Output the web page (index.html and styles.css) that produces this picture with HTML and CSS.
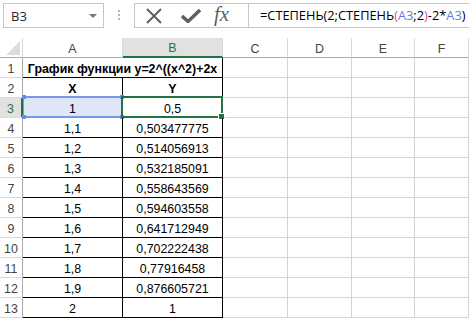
FILE: index.html
```html
<!DOCTYPE html>
<html lang="ru">
<head>
  <meta charset="UTF-8">
  <title>СТЕПЕНЬ</title>
  <link rel="stylesheet" href="styles.css">
</head>
<body>
  <div class="toolbar">
    <div class="name-box">
      <span>B3</span>
      <span class="arrow"></span>
    </div>
    <div class="grip"><i></i><i></i><i></i></div>
    <div class="formula-box">
      <div class="buttons">
        <svg width="18" height="16" viewBox="0 0 18 16"><path d="M2 1 L16 15 M16 1 L2 15" stroke="#5f5f5f" stroke-width="2" fill="none"/></svg>
        <svg width="20" height="14" viewBox="0 0 20 14"><path d="M1 7 L7 12.5 L19 1" stroke="#5f5f5f" stroke-width="3.4" fill="none"/></svg>
        <span class="fx">fx</span>
      </div>
      <div class="formula">=СТЕПЕНЬ(2;СТЕПЕНЬ<span class="paren">(</span><span class="ref">A3</span>;2<span class="paren">)</span>-2*<span class="ref">A3</span>)</div>
    </div>
  </div>

  <div class="sheet">
    <div class="hd corner"></div>
    <div class="hd">A</div>
    <div class="hd active">B</div>
    <div class="hd">C</div>
    <div class="hd">D</div>
    <div class="hd">E</div>
    <div class="hd">F</div>

    <div class="rh">1</div>
    <div class="c b title">График функции y=2^((x^2)+2x</div>
    <div class="c"></div><div class="c"></div><div class="c"></div><div class="c"></div>

    <div class="rh">2</div>
    <div class="c b bold">X</div><div class="c b bold">Y</div>
    <div class="c"></div><div class="c"></div><div class="c"></div><div class="c"></div>

    <div class="rh active">3</div>
    <div class="c b range">1<span class="range-box"><i class="h tl"></i><i class="h tr"></i><i class="h bl"></i><i class="h br"></i></span></div>
    <div class="c b">0,5<span class="cursor"><i class="fill"></i></span></div>
    <div class="c"></div><div class="c"></div><div class="c"></div><div class="c"></div>

    <div class="rh">4</div>
    <div class="c b">1,1</div><div class="c b">0,503477775</div>
    <div class="c"></div><div class="c"></div><div class="c"></div><div class="c"></div>

    <div class="rh">5</div>
    <div class="c b">1,2</div><div class="c b">0,514056913</div>
    <div class="c"></div><div class="c"></div><div class="c"></div><div class="c"></div>

    <div class="rh">6</div>
    <div class="c b">1,3</div><div class="c b">0,532185091</div>
    <div class="c"></div><div class="c"></div><div class="c"></div><div class="c"></div>

    <div class="rh">7</div>
    <div class="c b">1,4</div><div class="c b">0,558643569</div>
    <div class="c"></div><div class="c"></div><div class="c"></div><div class="c"></div>

    <div class="rh">8</div>
    <div class="c b">1,5</div><div class="c b">0,594603558</div>
    <div class="c"></div><div class="c"></div><div class="c"></div><div class="c"></div>

    <div class="rh">9</div>
    <div class="c b">1,6</div><div class="c b">0,641712949</div>
    <div class="c"></div><div class="c"></div><div class="c"></div><div class="c"></div>

    <div class="rh">10</div>
    <div class="c b">1,7</div><div class="c b">0,702222438</div>
    <div class="c"></div><div class="c"></div><div class="c"></div><div class="c"></div>

    <div class="rh">11</div>
    <div class="c b">1,8</div><div class="c b">0,77916458</div>
    <div class="c"></div><div class="c"></div><div class="c"></div><div class="c"></div>

    <div class="rh">12</div>
    <div class="c b">1,9</div><div class="c b">0,876605721</div>
    <div class="c"></div><div class="c"></div><div class="c"></div><div class="c"></div>

    <div class="rh">13</div>
    <div class="c b">2</div><div class="c b">1</div>
    <div class="c"></div><div class="c"></div><div class="c"></div><div class="c"></div>
  </div>
</body>
</html>
```

FILE: styles.css
```css
body {
  margin: 0;
  padding: 0;
  background-color: #fff;
  font-family: "Liberation Sans", Arial, sans-serif;
  overflow: hidden;
}
.toolbar {
  display: flex;
  align-items: flex-start;
  height: 38px;
  padding: 3px 0 0 3px;
  box-sizing: border-box;
}
.name-box {
  display: flex;
  align-items: center;
  justify-content: space-between;
  width: 101px;
  height: 25px;
  padding: 0 6px 0 7px;
  box-sizing: border-box;
  border: 1px solid #c6c6c6;
  font-family: "Open Sans", sans-serif;
  font-size: 13px;
  color: #262626;
}
.arrow {
  width: 0;
  height: 0;
  border-left: 4px solid transparent;
  border-right: 4px solid transparent;
  border-top: 4px solid #777;
}
.grip {
  display: flex;
  flex-direction: column;
  gap: 2px;
  padding: 7px 0 0 14px;
  width: 16px;
}
.grip i {
  width: 2px;
  height: 2px;
  background-color: #b5b5b5;
}
.formula-box {
  display: flex;
  flex: 1;
  height: 25px;
  border: 1px solid #c6c6c6;
  border-right: none;
  box-sizing: border-box;
}
.buttons {
  display: flex;
  align-items: center;
  gap: 18px;
  width: 113px;
  padding-left: 10px;
  box-sizing: border-box;
}
.fx {
  font-family: "Liberation Serif", serif;
  font-style: italic;
  font-size: 21px;
  color: #5f5f5f;
  margin-left: -5px;
  margin-top: -3px;
}
.formula {
  flex: 1;
  border-left: 1px solid #c6c6c6;
  padding-left: 11px;
  font-family: "Open Sans", sans-serif;
  font-size: 12.8px;
  line-height: 23px;
  color: #000;
  white-space: nowrap;
}
.paren {
  color: #e2508d;
}
.ref {
  color: #5b80e6;
}
.sheet {
  display: grid;
  grid-template-columns: 23px 100px 100px 65px 64px 63px 1fr;
  grid-template-rows: repeat(14, 20px);
  font-size: 12.4px;
}
.sheet > div {
  box-sizing: border-box;
  display: flex;
  align-items: center;
  justify-content: center;
  padding-top: 2px;
  white-space: nowrap;
}
.hd {
  color: #444;
  border-right: 1px solid #d9d9d9;
  border-bottom: 1px solid #ababab;
}
.hd.active {
  background-color: #e1e1e1;
  color: #217346;
  border-bottom: 2px solid #217346;
}
.corner {
  position: relative;
}
.corner::after {
  content: "";
  position: absolute;
  right: 2px;
  bottom: 2px;
  width: 0;
  height: 0;
  border-left: 14px solid transparent;
  border-bottom: 14px solid #dcdcdc;
}
.rh {
  color: #444;
  border-right: 1px solid #ababab;
  border-bottom: 1px solid #d9d9d9;
}
.rh.active {
  background-color: #e1e1e1;
  color: #217346;
  border-right: 2px solid #217346;
}
.c {
  border-right: 1px solid #d4d4d4;
  border-bottom: 1px solid #d4d4d4;
  color: #000;
}
.c.b {
  border-right-color: #000;
  border-bottom-color: #000;
  position: relative;
}
.title {
  grid-column: span 2;
  font-weight: bold;
}
.bold {
  font-weight: bold;
}
.range {
  background-color: #dfe6f7;
}
.range-box {
  position: absolute;
  top: -2px;
  left: 0;
  right: -1px;
  bottom: -1px;
  border: 2px solid #7598e8;
  border-left-width: 1px;
}
.h {
  position: absolute;
  width: 4px;
  height: 4px;
  background-color: #6a8ee6;
}
.h.tl { top: -3px; left: -2px; }
.h.tr { top: -3px; right: -3px; }
.h.bl { bottom: -3px; left: -2px; }
.h.br { bottom: -3px; right: -3px; }
.cursor {
  position: absolute;
  top: -2px;
  left: -2px;
  right: -1px;
  bottom: -1px;
  border: 2px solid #217346;
}
.fill {
  position: absolute;
  right: -4px;
  bottom: -4px;
  width: 5px;
  height: 5px;
  background-color: #217346;
  border: 1px solid #fff;
}
```
